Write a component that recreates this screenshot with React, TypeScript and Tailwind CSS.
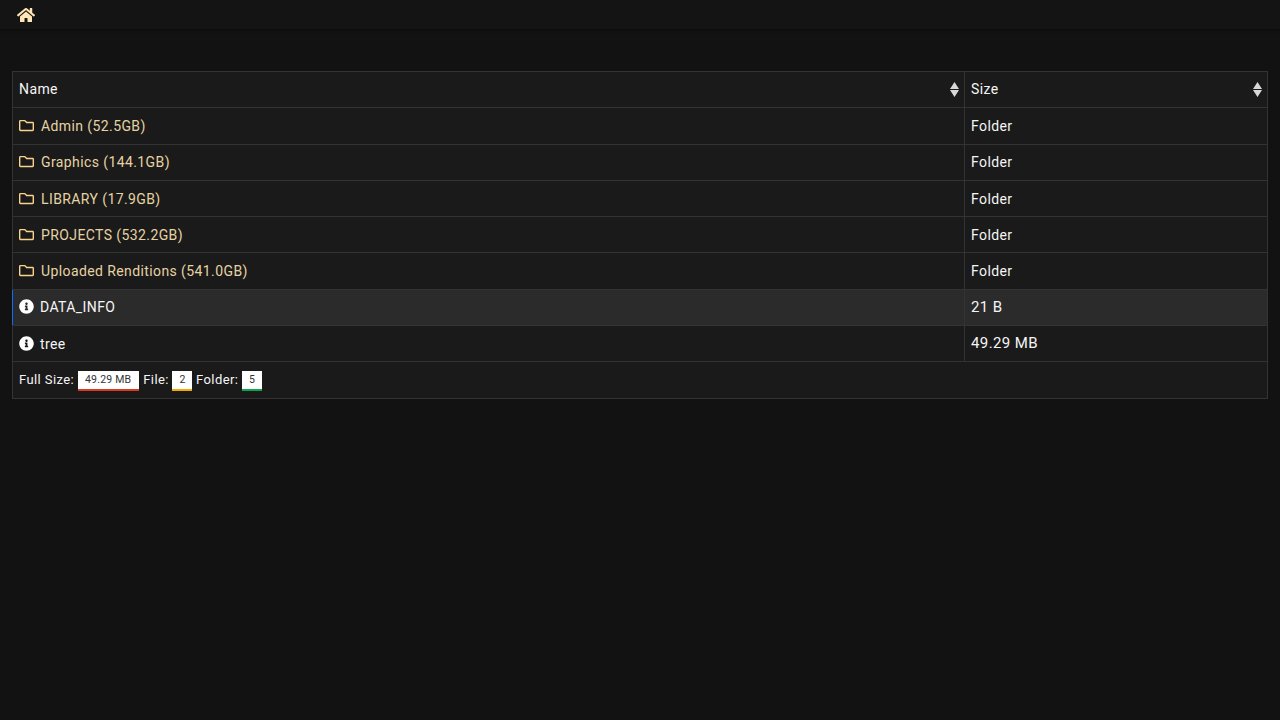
import { FaHome, FaInfoCircle, FaRegFolder } from "react-icons/fa";

const folders = [
  { name: "Admin (52.5GB)" },
  { name: "Graphics (144.1GB)" },
  { name: "LIBRARY (17.9GB)" },
  { name: "PROJECTS (532.2GB)" },
  { name: "Uploaded Renditions (541.0GB)" },
];

const files = [
  { name: "DATA_INFO", size: "21 B", active: true },
  { name: "tree", size: "49.29 MB", active: false },
];

const SortIcon = () => (
  <svg width="9" height="15" viewBox="0 0 9 15" className="absolute right-[5px] top-[10px]">
    <path d="M4.5 0 L9 7 L0 7 Z M0 8 L9 8 L4.5 15 Z" fill="#d8d8d8" />
  </svg>
);

const Badge = ({ text, color, width }: { text: string; color: string; width: string }) => (
  <span className={`inline-block h-5 bg-white text-center text-[10.5px] tracking-[0.2px] leading-[18px] text-[#333] border-b-2 align-middle ${color} ${width}`}>
    {text}
  </span>
);

export default function App() {
  return (
    <div className="min-h-[720px] bg-[#121212] font-['Roboto',sans-serif] text-sm tracking-[0.4px] text-[#f5f5f5]">
      <nav className="flex h-[29px] items-center bg-[#141414] pl-[17px] shadow-[0_1px_3px_rgba(0,0,0,0.4)]">
        <FaHome className="mt-[1px] text-[18px] text-[#fde5b5]" />
      </nav>
      <div className="px-3 pt-[42px]">
        <table className="w-full table-fixed border-collapse bg-[#1a1a1a]">
          <colgroup>
            <col className="w-[952px]" />
            <col />
          </colgroup>
          <thead>
            <tr className="h-[36.3px]">
              <th className="relative border border-[#333] px-[6px] pb-[1px] text-left font-normal">
                Name
                <SortIcon />
              </th>
              <th className="relative border border-[#333] px-[6px] pb-[1px] text-left font-normal">
                Size
                <SortIcon />
              </th>
            </tr>
          </thead>
          <tbody>
            {folders.map((folder) => (
              <tr key={folder.name} className="h-[36.3px]">
                <td className="border border-[#333] px-[6px] text-[#e6d3a3]">
                  <span className="flex items-center gap-[7px]">
                    <FaRegFolder className="mb-[1px] text-[15px] text-[#fbd38d]" />
                    {folder.name}
                  </span>
                </td>
                <td className="border border-[#333] px-[6px]">Folder</td>
              </tr>
            ))}
            {files.map((file) => (
              <tr key={file.name} className={file.active ? "h-[36.3px] bg-[#2b2b2b]" : "h-[36.3px]"}>
                <td className={file.active ? "border border-[#333] border-l-[#0d6efd] px-[6px]" : "border border-[#333] px-[6px]"}>
                  <span className="flex items-center gap-[6px]">
                    <FaInfoCircle className="mb-[1px] text-[15px] text-white" />
                    {file.name}
                  </span>
                </td>
                <td className="border border-[#333] px-[6px] text-[15px]">{file.size}</td>
              </tr>
            ))}
            <tr className="h-[36.3px]">
              <td colSpan={2} className="border border-[#333] px-[6px] pt-[2px] text-[13px]">
                Full Size: <Badge text="49.29 MB" color="border-[#dc3a1f]" width="w-[61px]" />{" "}
                <span className="ml-[1px]">File:</span>{" "}
                <Badge text="2" color="border-[#f5a800]" width="w-5" /> Folder:{" "}
                <Badge text="5" color="border-[#0aa650]" width="w-5" />
              </td>
            </tr>
          </tbody>
        </table>
      </div>
    </div>
  );
}
